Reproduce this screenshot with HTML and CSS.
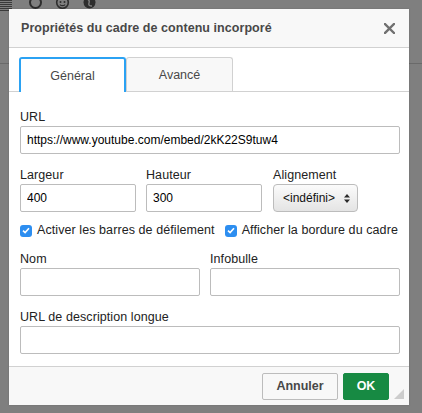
FILE: index.html
```html
<!DOCTYPE html>
<html lang="fr">
<head>
<meta charset="utf-8">
<title>Propriétés du cadre de contenu incorporé</title>
<link rel="stylesheet" href="styles.css">
</head>
<body>
<div class="editor">
  <div class="toolbar">
    <svg class="tb-list" width="12" height="13" viewBox="0 0 12 13"><path d="M0 1.5h12M0 3.5h12M0 5.5h12M0 7.5h12M0 9.5h12M0 11.5h12" stroke="#3a3a3a" stroke-width="1"/></svg>
    <svg class="tb-icon" width="15" height="15" viewBox="0 0 15 15"><circle cx="7.5" cy="7.5" r="5.5" fill="none" stroke="#2e2e2e" stroke-width="2"/></svg>
    <svg class="tb-icon" width="15" height="15" viewBox="0 0 15 15"><circle cx="7.5" cy="7.5" r="5.8" fill="none" stroke="#2e2e2e" stroke-width="1.6"/><circle cx="5.5" cy="7" r="1" fill="#2e2e2e"/><circle cx="9.5" cy="7" r="1" fill="#2e2e2e"/><path d="M4.8 9.6q2.7 2.2 5.4 0" fill="none" stroke="#2e2e2e" stroke-width="1.2"/></svg>
    <svg class="tb-icon" width="15" height="15" viewBox="0 0 15 15"><circle cx="7.5" cy="7.5" r="6" fill="#2e2e2e"/><path d="M5 4q3 1 2 4t3 3" fill="none" stroke="#7f7f7f" stroke-width="1.4"/></svg>
  </div>
  <div class="editor-rule"></div>
</div>

<div class="dialog">
  <div class="dlg-title">
    <span class="dlg-title-text">Propriétés du cadre de contenu incorporé</span>
    <svg class="dlg-close" width="11" height="11" viewBox="0 0 11 11"><path d="M1 1L10 10M10 1L1 10" stroke="#707070" stroke-width="2.4" stroke-linecap="square"/></svg>
  </div>
  <div class="dlg-body">
    <div class="tabs">
      <div class="tab tab-active">Général</div>
      <div class="tab">Avancé</div>
    </div>
    <div class="panel">
      <div class="field">
        <label class="lbl">URL</label>
        <input class="txt" type="text" value="https://www.youtube.com/embed/2kK22S9tuw4">
      </div>
      <div class="row row-size">
        <div class="field f-w">
          <label class="lbl">Largeur</label>
          <input class="txt" type="text" value="400">
        </div>
        <div class="field f-h">
          <label class="lbl">Hauteur</label>
          <input class="txt" type="text" value="300">
        </div>
        <div class="field f-a">
          <label class="lbl">Alignement</label>
          <div class="select">
            <span>&lt;indéfini&gt;</span>
            <svg class="sel-arrows" width="6" height="9" viewBox="0 0 6 9"><path d="M3 0L6 3.5H0Z M3 9L6 5.5H0Z" fill="#2a2a2a"/></svg>
          </div>
        </div>
      </div>
      <div class="checks">
        <div class="check"><span class="cbox"><svg width="8" height="7" viewBox="0 0 8 7"><path d="M1 3.6L3.1 5.6L7 1.2" fill="none" stroke="#fff" stroke-width="1.6"/></svg></span><span>Activer les barres de défilement</span></div>
        <div class="check"><span class="cbox"><svg width="8" height="7" viewBox="0 0 8 7"><path d="M1 3.6L3.1 5.6L7 1.2" fill="none" stroke="#fff" stroke-width="1.6"/></svg></span><span>Afficher la bordure du cadre</span></div>
      </div>
      <div class="row row-name">
        <div class="field f-n">
          <label class="lbl">Nom</label>
          <input class="txt" type="text" value="">
        </div>
        <div class="field f-t">
          <label class="lbl">Infobulle</label>
          <input class="txt" type="text" value="">
        </div>
      </div>
      <div class="field f-desc">
        <label class="lbl">URL de description longue</label>
        <input class="txt" type="text" value="">
      </div>
    </div>
  </div>
  <div class="dlg-footer">
    <button class="btn btn-cancel" type="button">Annuler</button>
    <button class="btn btn-ok" type="button">OK</button>
    <span class="resize"></span>
  </div>
</div>
</body>
</html>
```

FILE: styles.css
```css
html, body {
  margin: 0;
  padding: 0;
}
body {
  width: 422px;
  height: 413px;
  overflow: hidden;
  background: #7f7f7f;
  font-family: "Liberation Sans", Arial, Helvetica, sans-serif;
  position: relative;
}

/* background editor (under the modal overlay) */
.editor {
  height: 413px;
}
.toolbar {
  display: flex;
  align-items: flex-start;
  height: 9px;
  overflow: visible;
}
.tb-list {
  display: block;
  margin-top: -1px;
}
.tb-icon {
  display: block;
  margin-top: -5px;
}
.tb-list + .tb-icon { margin-left: 16px; }
.tb-icon + .tb-icon { margin-left: 12px; }
.editor-rule {
  margin-top: 54px;
  height: 1px;
  background: #6a6a6a;
}

/* dialog */
.dialog {
  position: absolute;
  left: 9px;
  top: 9px;
  width: 400px;
  height: 396px;
  background: #fff;
  display: flex;
  flex-direction: column;
  box-shadow: 0 0 2px rgba(0,0,0,0.15);
}
.dlg-title {
  height: 38px;
  flex: none;
  background: #f8f8f8;
  border-bottom: 1px solid #d1d1d1;
  display: flex;
  align-items: center;
  justify-content: space-between;
  padding: 0 14px 0 12px;
}
.dlg-title-text {
  font-weight: bold;
  font-size: 12.5px;
  color: #484848;
  letter-spacing: 0.05px;
}
.dlg-close {
  display: block;
  margin-top: 1px;
}

.dlg-body {
  flex: 1;
  display: flex;
  flex-direction: column;
}
.tabs {
  margin-top: 9px;
  display: flex;
  padding-left: 10px;
  border-bottom: 1px solid #d1d1d1;
  height: 34px;
}
.tab {
  box-sizing: border-box;
  height: 34px;
  width: 107px;
  font-size: 12.5px;
  color: #484848;
  display: flex;
  align-items: center;
  justify-content: center;
  background: #f8f8f8;
  border: 1px solid #d1d1d1;
  border-bottom: none;
  border-radius: 3px 3px 0 0;
  padding-top: 1px;
}
.tab-active {
  background: #fff;
  border: 2px solid #2ba2f3;
  border-bottom: none;
  height: 35px;
  margin-bottom: -1px;
  position: relative;
  z-index: 1;
}

.panel {
  padding: 17px 9px 0 11px;
  display: flex;
  flex-direction: column;
}
.field {
  display: flex;
  flex-direction: column;
}
.lbl {
  font-size: 12.5px;
  line-height: 16px;
  color: #222;
  margin-bottom: 1px;
  white-space: nowrap;
  letter-spacing: 0.08px;
}
.txt {
  box-sizing: border-box;
  height: 28px;
  margin: 0;
  border: 1px solid #bcbcbc;
  border-radius: 2px;
  padding: 0 6px;
  font-family: "Liberation Sans", Arial, Helvetica, sans-serif;
  font-size: 12px;
  color: #000;
  background: #fff;
  outline: none;
}
.row {
  display: flex;
  margin-top: 13px;
}
.f-w, .f-h { width: 116px; }
.f-w { margin-right: 10px; }
.f-h { margin-right: 11px; }
.f-a { flex: 1; }
.select {
  box-sizing: border-box;
  width: 85px;
  height: 28px;
  border: 1px solid #bcbcbc;
  border-radius: 4px;
  background: linear-gradient(#fbfbfb, #e4e4e4);
  display: flex;
  align-items: center;
  justify-content: space-between;
  padding: 0 7px 0 9px;
  font-size: 12px;
  color: #111;
}
.sel-arrows { display: block; }

.checks {
  display: flex;
  margin-top: 10px;
  height: 16px;
  align-items: center;
}
.check {
  display: flex;
  align-items: center;
  font-size: 12.5px;
  color: #222;
  white-space: nowrap;
  letter-spacing: 0.08px;
}
.check + .check { margin-left: 10px; }
.cbox {
  box-sizing: border-box;
  width: 12px;
  height: 12px;
  border-radius: 3px;
  background: #2d8ef0;
  margin-right: 5px;
  display: flex;
  align-items: center;
  justify-content: center;
  margin-top: 1px;
}
.cbox svg { display: block; }

.row-name { margin-top: 13px; }
.f-n { width: 180px; margin-right: 10px; }
.f-t { flex: 1; }
.f-desc { margin-top: 13px; }

.dlg-footer {
  flex: none;
  height: 38px;
  border-top: 1px solid #d1d1d1;
  background: #f8f8f8;
  display: flex;
  align-items: center;
  justify-content: flex-end;
  padding-right: 20px;
  position: relative;
}
.btn {
  box-sizing: border-box;
  height: 27px;
  margin: 0;
  border-radius: 2px;
  font-family: "Liberation Sans", Arial, Helvetica, sans-serif;
  font-weight: bold;
  font-size: 12.5px;
  padding: 0;
  cursor: pointer;
}
.btn-cancel {
  width: 76px;
  border: 1px solid #bcbcbc;
  background: #f8f8f8;
  color: #484848;
}
.btn-ok {
  width: 46px;
  margin-left: 5px;
  border: 1px solid #178a43;
  background: #178a43;
  color: #fff;
}
.resize {
  position: absolute;
  right: 5px;
  bottom: 6px;
  width: 0;
  height: 0;
  border-left: 10px solid transparent;
  border-bottom: 10px solid #cdcdcd;
}
```
